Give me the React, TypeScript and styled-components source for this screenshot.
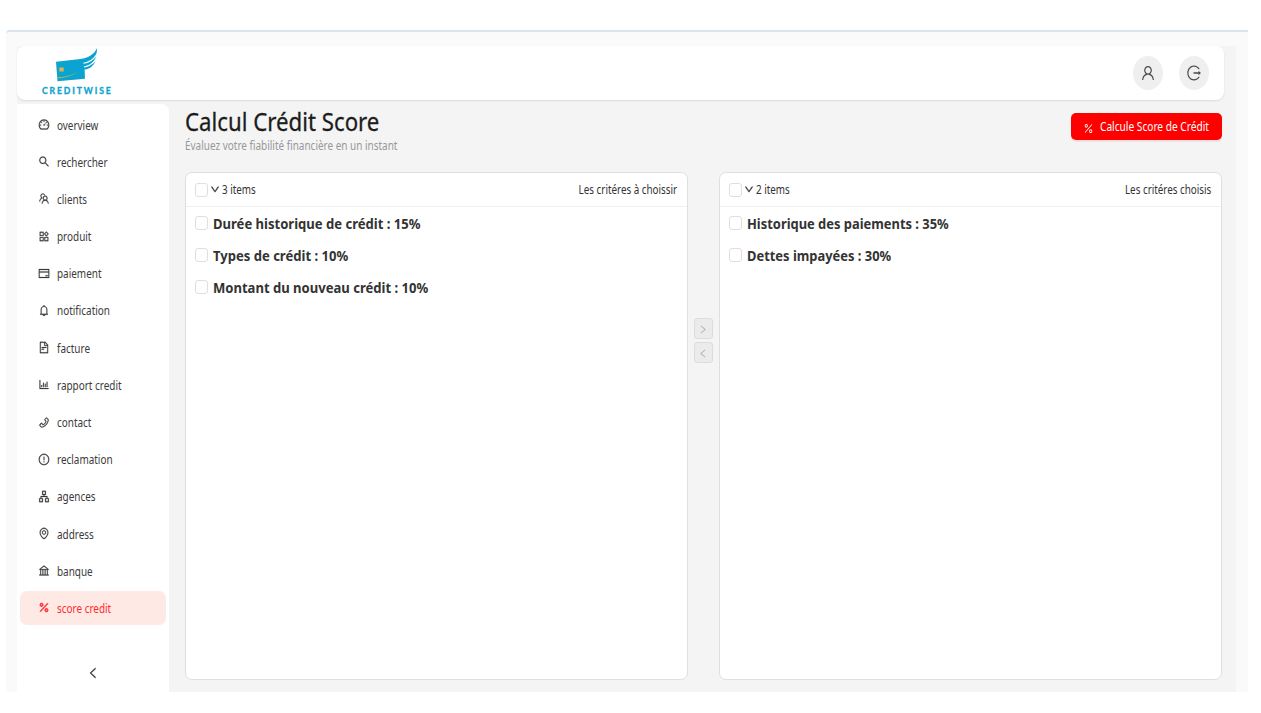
import React from "react";
import styled, { createGlobalStyle } from "styled-components";
import {
  AiOutlineApartment,
  AiOutlineBank,
  AiOutlineBarChart,
  AiOutlineBell,
  AiOutlineCreditCard,
  AiOutlineDashboard,
  AiOutlineDown,
  AiOutlineEnvironment,
  AiOutlineExclamationCircle,
  AiOutlineFileText,
  AiOutlineLeft,
  AiOutlineLogout,
  AiOutlinePercentage,
  AiOutlinePhone,
  AiOutlineProduct,
  AiOutlineRight,
  AiOutlineSearch,
  AiOutlineTeam,
  AiOutlineUser,
} from "react-icons/ai";

const GlobalStyle = createGlobalStyle`
  * { box-sizing: border-box; }
  body {
    margin: 0;
    background: #fff;
    font-family: "Noto Sans", "Open Sans", sans-serif;
    color: #333;
  }
  svg { display: block; }
`;

const Window = styled.div`
  width: 1242px;
  height: 662px;
  margin: 30px 0 0 6px;
  padding: 14px 12px 0 11px;
  border-top: 2px solid #d8e4ee;
  border-radius: 4px 0 0 4px;
  background: #fafafa;
`;

const Layout = styled.div`
  display: flex;
  flex-direction: column;
  height: 646px;
  background: #f4f4f4;
`;

const Header = styled.header`
  display: flex;
  justify-content: space-between;
  flex: none;
  width: 1207px;
  height: 54px;
  padding: 0 15px 0 24px;
  border-radius: 8px;
  background: #fff;
  box-shadow: 0 1px 2px rgba(0, 0, 0, 0.1);
`;

const Brand = styled.div`
  display: flex;
  flex-direction: column;
  width: 80px;
`;

const BrandName = styled.div`
  margin: 1px 0 0 1px;
  font: 700 8.6px/11px Lato, sans-serif;
  letter-spacing: 1.9px;
  color: #0ba3cf;
  -webkit-text-stroke: 0.3px #0ba3cf;
  white-space: nowrap;
`;

const HeaderActions = styled.div`
  display: flex;
  align-items: center;
  gap: 16px;
`;

const RoundButton = styled.button`
  display: flex;
  align-items: center;
  justify-content: center;
  width: 30px;
  height: 34px;
  padding: 0 1px 0 0;
  border: 0;
  border-radius: 50%;
  background: #efefef;
  color: #4a4a4a;
`;

const Glyph = styled.span<{ $w: number; $h: number; $weight: number }>`
  display: block;
  flex: none;
  width: ${(p) => p.$w}px;
  height: ${(p) => p.$h}px;
  svg {
    width: 100%;
    height: 100%;
    stroke-width: ${(p) => p.$weight}px;
  }
`;

const Label = styled.span<{ $size: number; $scale: number; $bold?: boolean; $end?: boolean }>`
  display: inline-block;
  font-size: ${(p) => p.$size}px;
  font-weight: ${(p) => (p.$bold ? 700 : 400)};
  white-space: nowrap;
  transform: scaleX(${(p) => p.$scale});
  transform-origin: ${(p) => (p.$end ? "right" : "left")} center;
`;

const Body = styled.div`
  display: flex;
  flex: 1;
  padding-top: 4px;
`;

const Sider = styled.aside`
  display: flex;
  flex-direction: column;
  justify-content: space-between;
  width: 152px;
  border-radius: 0 8px 0 0;
  background: #fff;
`;

const Menu = styled.nav`
  display: flex;
  flex-direction: column;
  gap: 3.2px;
  padding: 4px 3px 0;
`;

const MenuItem = styled.a<{ $active?: boolean }>`
  display: flex;
  align-items: center;
  gap: 7px;
  height: 34px;
  padding-left: 17.5px;
  border-radius: 7px;
  background: ${(p) => (p.$active ? "#ffe9e5" : "transparent")};
  color: ${(p) => (p.$active ? "#ff2a2e" : "#3a3a3a")};
  ${Glyph} {
    margin-top: -1px;
  }
`;

const Trigger = styled.button`
  display: flex;
  align-items: center;
  justify-content: center;
  height: 39px;
  padding: 1px 0 0;
  border: 0;
  background: #fff;
  color: #333;
`;

const Content = styled.main`
  width: 1037px;
  margin-left: 16px;
`;

const TitleBar = styled.div`
  display: flex;
  justify-content: space-between;
  height: 68px;
`;

const Titles = styled.div`
  display: flex;
  flex-direction: column;
`;

const Title = styled.h1`
  margin: -3px 0 0;
  height: 36px;
  color: #1c1c1c;
  font-weight: 400;
  line-height: 36px;
  -webkit-text-stroke: 0.3px #1c1c1c;
`;

const Subtitle = styled.div`
  color: #989898;
  line-height: 14px;
`;

const PrimaryButton = styled.button`
  display: flex;
  align-items: center;
  gap: 6px;
  width: 151px;
  height: 27px;
  margin-top: 9px;
  padding: 0 0 0 12px;
  border: 0;
  border-radius: 5px;
  background: #ff0000;
  box-shadow: 0 2px 1px rgba(255, 0, 0, 0.08);
  color: #fff;
  font-family: inherit;
  ${Glyph} {
    margin-top: 4px;
  }
`;

const Transfer = styled.div`
  display: flex;
  justify-content: space-between;
  height: 508px;
`;

const Panel = styled.section`
  width: 503px;
  height: 508px;
  border: 1px solid #dfdfdf;
  border-radius: 7px;
  background: #fff;
`;

const PanelHeader = styled.div`
  display: flex;
  align-items: center;
  height: 34px;
  padding: 0 10px 0 9px;
  border-bottom: 1px solid #f0f0f0;
  ${Glyph} {
    margin: 0 2px 0 2px;
  }
`;

const PanelTitle = styled.div`
  display: flex;
  margin-left: auto;
`;

const Checkbox = styled.span`
  flex: none;
  width: 13px;
  height: 14px;
  border: 1px solid #dfdfdf;
  border-radius: 3px;
  background: #fff;
`;

const PanelRow = styled.div`
  display: flex;
  align-items: center;
  gap: 5px;
  height: 32.3px;
  padding-left: 9px;
  ${Checkbox} {
    margin-top: -1px;
  }
  ${Label} {
    margin-top: -1px;
  }
`;

const Moves = styled.div`
  display: flex;
  flex-direction: column;
  gap: 3px;
  padding-top: 146px;
`;

const MoveButton = styled.button`
  display: flex;
  align-items: center;
  justify-content: center;
  width: 19px;
  height: 21px;
  padding: 1px 1px 0 0;
  border: 1px solid #dcdcdc;
  border-radius: 3px;
  background: #ebebeb;
  color: #aaa;
`;

const menu = [
  { icon: AiOutlineDashboard, text: "overview" },
  { icon: AiOutlineSearch, text: "rechercher" },
  { icon: AiOutlineTeam, text: "clients" },
  { icon: AiOutlineProduct, text: "produit" },
  { icon: AiOutlineCreditCard, text: "paiement" },
  { icon: AiOutlineBell, text: "notification" },
  { icon: AiOutlineFileText, text: "facture" },
  { icon: AiOutlineBarChart, text: "rapport credit" },
  { icon: AiOutlinePhone, text: "contact" },
  { icon: AiOutlineExclamationCircle, text: "reclamation" },
  { icon: AiOutlineApartment, text: "agences" },
  { icon: AiOutlineEnvironment, text: "address" },
  { icon: AiOutlineBank, text: "banque" },
  { icon: AiOutlinePercentage, text: "score credit", active: true },
];

function stretch(Icon: React.ComponentType<any>, w: number, h: number, weight = 0) {
  return (
    <Glyph $w={w} $h={h} $weight={weight}>
      <Icon preserveAspectRatio="none" />
    </Glyph>
  );
}

function Logo() {
  return (
    <svg width="80" height="39" viewBox="0 0 80 39">
      <path d="M15 15.7 39.5 12.9C47.5 11.8 53 8.5 55.9 2.2 56.4 7 54.4 10.6 51 13.6 52.8 13 54.2 11.6 55.3 9.6 54.6 13.6 52.2 16.6 49 18.6 51.2 18.2 53 16.8 54.4 14.8 53 19.4 49.5 22.8 43.6 23.6L44 32.7 16.5 35.2Z" fill="#0ba3cf" />
      <path d="M42.5 17.3C47.5 16.6 52 14 55.4 9.4M43 21C47.5 20.2 51.4 18 54.5 14.4" fill="none" stroke="#fff" strokeWidth="1.1" />
      <rect x="18.3" y="21.5" width="4.4" height="4" fill="#dfb352" />
      <path d="M16.5 31.3C24 31.1 31 29.3 37 25.8 31 30.2 24 32.3 16.6 32.2Z" fill="#a9b36a" />
    </svg>
  );
}

function TransferPanel({ count, title, rows, rowScale }: {
  count: string;
  title: string;
  rows: string[];
  rowScale: number;
}) {
  return (
    <Panel>
      <PanelHeader>
        <Checkbox />
        {stretch(AiOutlineDown, 10, 11, 40)}
        <Label $size={12} $scale={0.82}>{count}</Label>
        <PanelTitle>
          <Label $size={12} $scale={0.82} $end>{title}</Label>
        </PanelTitle>
      </PanelHeader>
      {rows.map((text) => (
        <PanelRow key={text}>
          <Checkbox />
          <Label $size={14.5} $scale={rowScale} $bold>{text}</Label>
        </PanelRow>
      ))}
    </Panel>
  );
}

export default function App() {
  return (
    <>
      <GlobalStyle />
      <Window>
        <Layout>
          <Header>
            <Brand>
              <Logo />
              <BrandName>CREDITWISE</BrandName>
            </Brand>
            <HeaderActions>
              <RoundButton>{stretch(AiOutlineUser, 16, 18)}</RoundButton>
              <RoundButton>{stretch(AiOutlineLogout, 16, 18)}</RoundButton>
            </HeaderActions>
          </Header>
          <Body>
            <Sider>
              <Menu>
                {menu.map((m) => (
                  <MenuItem key={m.text} $active={m.active}>
                    {stretch(m.icon, 12, 13, m.active ? 50 : 18)}
                    <Label $size={12.5} $scale={0.795}>{m.text}</Label>
                  </MenuItem>
                ))}
              </Menu>
              <Trigger>{stretch(AiOutlineLeft, 12, 14, 20)}</Trigger>
            </Sider>
            <Content>
              <TitleBar>
                <Titles>
                  <Title><Label $size={25.5} $scale={0.872}>Calcul Crédit Score</Label></Title>
                  <Subtitle><Label $size={12} $scale={0.83}>Évaluez votre fiabilité financière en un instant</Label></Subtitle>
                </Titles>
                <PrimaryButton>
                  {stretch(AiOutlinePercentage, 11, 13)}
                  <Label $size={12} $scale={0.845}>Calcule Score de Crédit</Label>
                </PrimaryButton>
              </TitleBar>
              <Transfer>
                <TransferPanel
                  count="3 items"
                  title="Les critéres à choissir"
                  rowScale={0.9}
                  rows={[
                    "Durée historique de crédit : 15%",
                    "Types de crédit : 10%",
                    "Montant du nouveau crédit : 10%",
                  ]}
                />
                <Moves>
                  <MoveButton>{stretch(AiOutlineRight, 10, 11)}</MoveButton>
                  <MoveButton>{stretch(AiOutlineLeft, 10, 11)}</MoveButton>
                </Moves>
                <TransferPanel
                  count="2 items"
                  title="Les critéres choisis"
                  rowScale={0.89}
                  rows={["Historique des paiements : 35%", "Dettes impayées : 30%"]}
                />
              </Transfer>
            </Content>
          </Body>
        </Layout>
      </Window>
    </>
  );
}
